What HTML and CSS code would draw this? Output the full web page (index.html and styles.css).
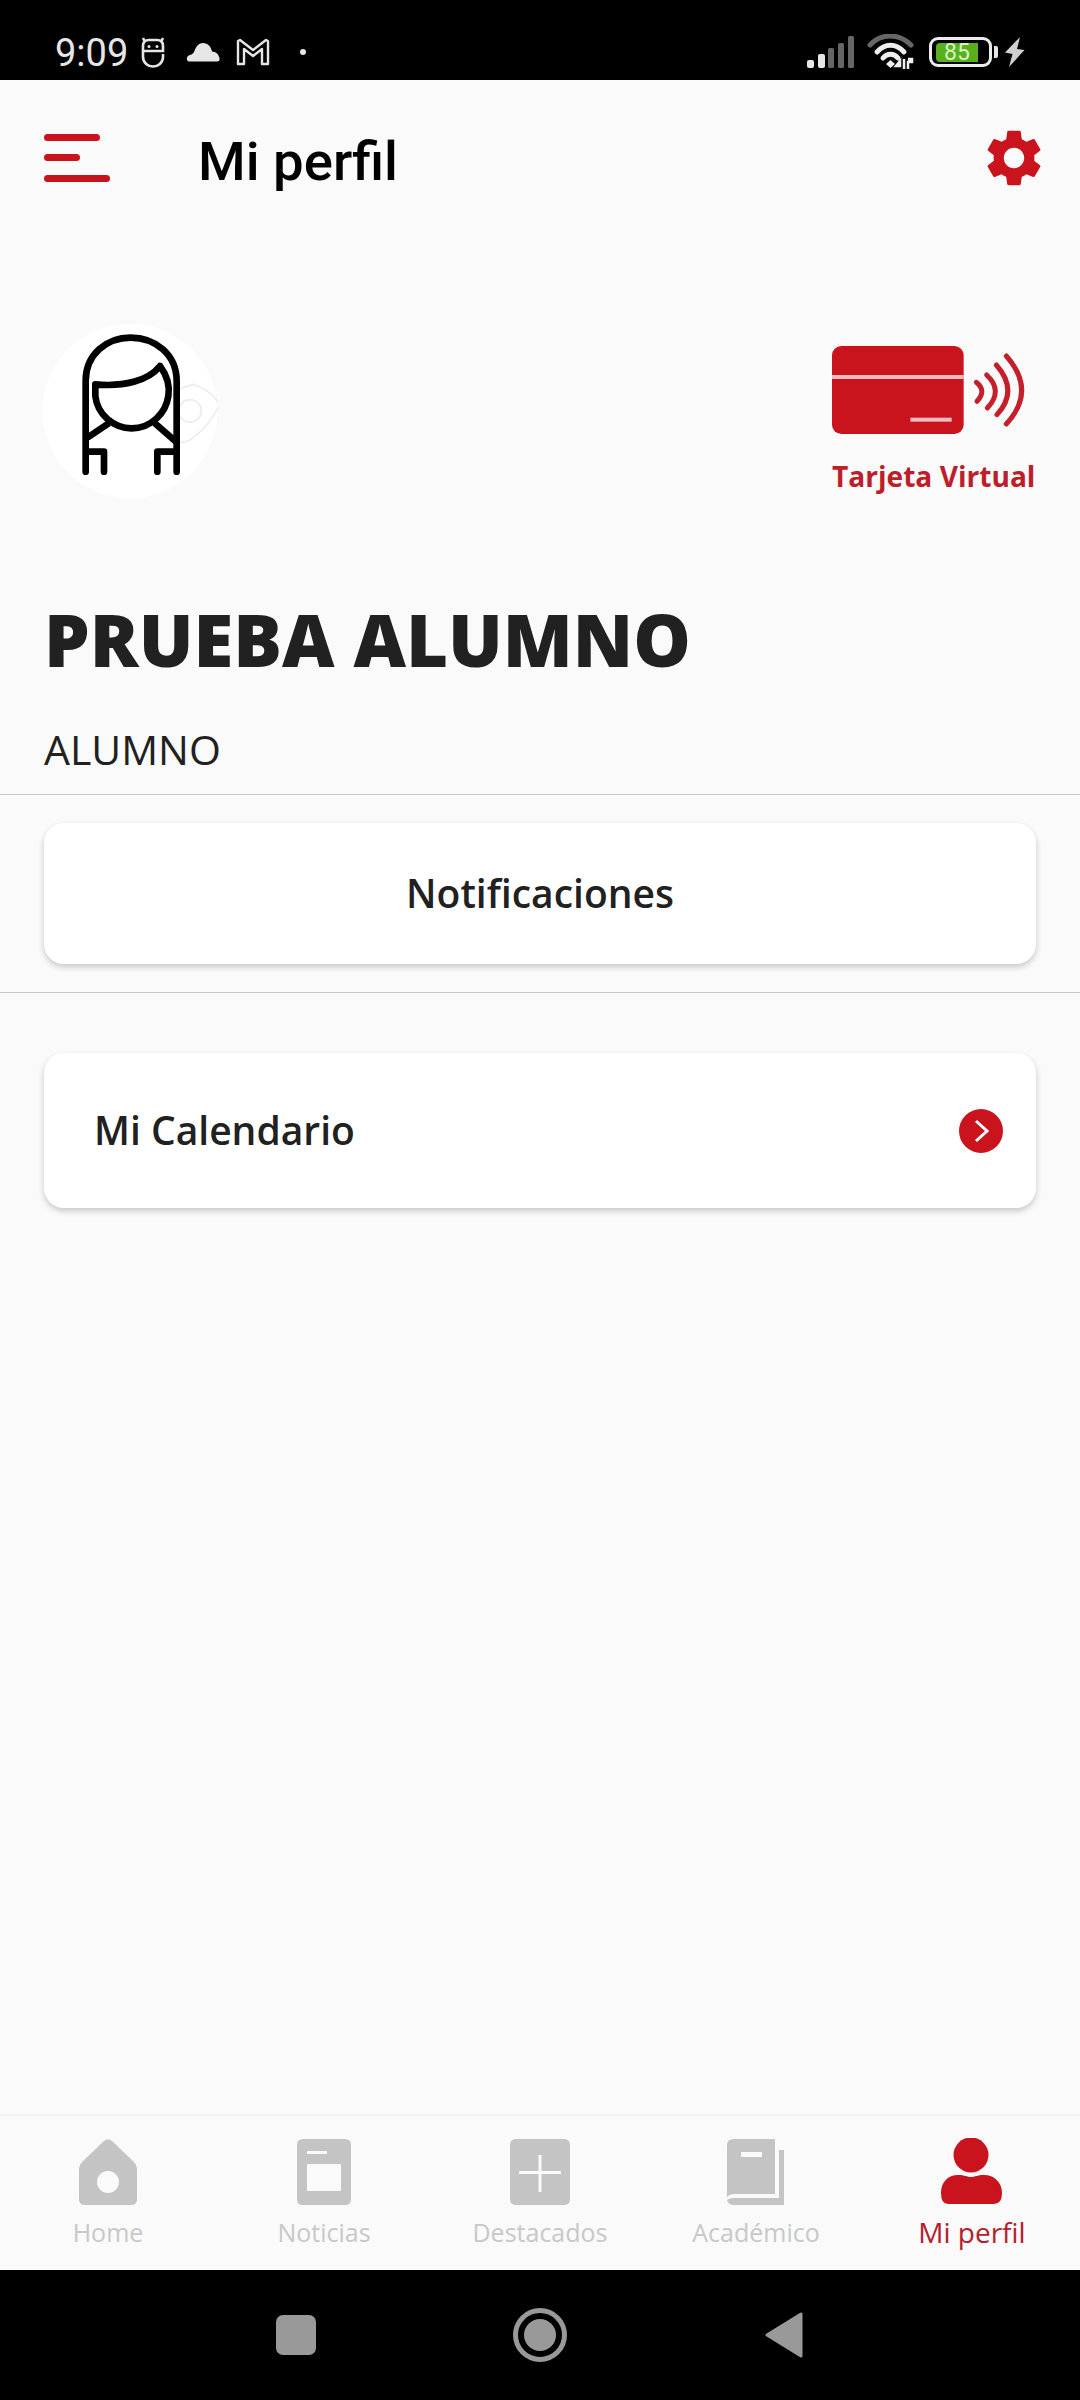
FILE: index.html
```html
<!DOCTYPE html>
<html lang="es">
<head>
    <meta charset="UTF-8">
    <meta name="viewport" content="width=device-width, initial-scale=1.0">
    <title>Mi perfil</title>
    <link rel="stylesheet" href="styles.css">
</head>
<body>
    <div class="status-bar">
        <div class="status-left">
            <span class="time">9:09</span>
            <svg class="st-android" width="24" height="32" viewBox="0 0 24 32" fill="none" stroke="#e6e6e6" stroke-width="2.6">
                <path d="M4 6 L2 2 M20 6 L22 2"/>
                <path d="M2 15 V10 Q2 4 8 4 H16 Q22 4 22 10 V15 H2 M2 15 V21 C2 27 7 30.500 12 30.500 C17 30.500 22 27 22 21 V18"/>
                <circle cx="8" cy="10.500" r="1.500" fill="#e6e6e6" stroke="none"/>
                <circle cx="16" cy="10.500" r="1.500" fill="#e6e6e6" stroke="none"/>
            </svg>
            <svg class="st-cloud" width="34" height="20" viewBox="0 0 34 20">
                <path fill="#e6e6e6" d="M3 19.500 C0 19.500 0 13.500 4 13 C6 12.500 7 11.500 8 10 C10 4 13 1 17 1 C22 1 25 5 26 9.500 C30 9.500 33 12.500 33.500 16.500 C34 18.500 33 19.500 31 19.500 Z"/>
            </svg>
            <svg class="st-mail" width="34" height="28" viewBox="0 0 34 28" fill="none" stroke="#e6e6e6" stroke-width="2.400" stroke-linejoin="round">
                <path d="M2 3 L4 2 L17 12 L30 2 L32 3 V26 H26 V11 L17 18 L8 11 V26 H2 Z"/>
            </svg>
            <span class="st-dot"></span>
        </div>
        <div class="status-right">
            <svg width="48" height="32" viewBox="0 0 48 32">
                <rect x="0" y="24" width="7" height="8" rx="2" fill="#e6e6e6"/>
                <rect x="11" y="18" width="7" height="14" rx="2" fill="#e6e6e6"/>
                <rect x="21" y="12" width="6" height="20" rx="1.500" fill="#666"/>
                <rect x="31" y="7" width="6" height="25" rx="1.500" fill="#666"/>
                <rect x="41" y="0" width="6" height="32" rx="1.500" fill="#666"/>
            </svg>
            <svg class="st-wifi" width="48" height="36" viewBox="0 0 48 36" fill="none" stroke-linecap="round">
                <path d="M3 11 C14 -1 32 -1 44 11" stroke="#666" stroke-width="5"/>
                <path d="M10 18 C18 9 29 9 37 18" stroke="#eee" stroke-width="5"/>
                <path d="M16 24 C20 19 27 19 31 24" stroke="#eee" stroke-width="5"/>
                <path d="M19 30 L23.500 26 L28 30 L23.500 34 Z" fill="#eee" stroke="none"/>
                <path d="M33 27 L29 32 H33 Z M37 25 V35 M41 25 H45 V28 H41 V35" stroke="#eee" stroke-width="2.500" fill="#eee" stroke-linecap="butt"/>
            </svg>
            <div class="battery">
                <div class="battery-body"><span class="battery-fill">85</span></div>
                <span class="battery-nub"></span>
            </div>
            <svg class="st-bolt" width="20" height="30" viewBox="0 0 20 30">
                <path fill="#d0d0d0" d="M15 0 L12 12 L19.500 13 L4 30 L7.500 17 L0 15.500 Z"/>
            </svg>
        </div>
    </div>

    <header class="top-bar">
        <svg class="menu-icon" width="66" height="48" viewBox="0 0 66 48">
            <rect x="0" y="0" width="56" height="7" rx="3.500"/>
            <rect x="0" y="20" width="36" height="7" rx="3.500"/>
            <rect x="0" y="41" width="66" height="7" rx="3.500"/>
        </svg>
        <h1 class="page-title">Mi perfil</h1>
        <svg class="gear" width="68" height="68" viewBox="0 0 24 24">
            <path fill-rule="evenodd" d="M19.140 12.940c.04-.3.06-.61.06-.94 0-.32-.02-.64-.07-.94l2.030-1.580a.49.49 0 0 0 .12-.61l-1.920-3.320a.488.488 0 0 0-.59-.22l-2.390.96c-.5-.38-1.030-.7-1.620-.94l-.36-2.540a.484.484 0 0 0-.48-.41h-3.840c-.24 0-.43.17-.47.41l-.36 2.540c-.59.24-1.130.57-1.620.94l-2.390-.96c-.22-.08-.47 0-.59.22L2.740 8.870c-.12.21-.08.47.12.61l2.030 1.580c-.05.3-.09.63-.09.94s.02.64.07.94l-2.030 1.580a.49.49 0 0 0-.12.61l1.920 3.320c.12.22.37.29.59.22l2.390-.96c.5.38 1.030.7 1.620.94l.36 2.540c.05.24.24.41.48.41h3.840c.24 0 .44-.17.47-.41l.36-2.540c.59-.24 1.130-.56 1.620-.94l2.390.96c.22.08.47 0 .59-.22l1.920-3.320c.12-.22.07-.47-.12-.61l-2.010-1.580zM12 15.600c-1.980 0-3.600-1.620-3.600-3.600s1.620-3.600 3.600-3.600 3.600 1.620 3.600 3.600-1.620 3.600-3.600 3.600z"/>
        </svg>
    </header>

    <main class="content">
        <div class="profile-row">
            <svg class="avatar" width="176" height="176" viewBox="66 66 528 528">
                <circle cx="330" cy="330" r="262" fill="#fff"/>
                <g fill="none" stroke="#ececec" stroke-width="5">
                    <path d="M425 330 C440 290 470 260 520 250 C550 260 580 280 600 310 C580 345 560 380 520 410 C495 430 470 430 455 400"/>
                    <circle cx="510" cy="330" r="34"/>
                </g>
                <g fill="none" stroke="#000" stroke-width="20" stroke-linecap="round" stroke-linejoin="round">
                    <path d="M197 512 V240 C197 160 260 110 332 110 C405 110 470 160 470 240 V512"/>
                    <path d="M226 250 C310 258 385 240 420 195 C442 225 450 255 445 285 C438 335 395 382 335 382 C280 382 232 340 226 285 Z"/>
                    <path d="M205 408 L262 370 M408 370 L468 422"/>
                    <path d="M205 452 H252 V512 M468 452 H412 V512"/>
                </g>
            </svg>
            <div class="virtual-card">
                <svg width="200" height="88" viewBox="97 78 600 264">
                    <rect x="97" y="78" width="395" height="264" rx="28" fill="#c9141e"/>
                    <rect x="97" y="165" width="395" height="12" fill="#f0bcc0"/>
                    <rect x="332" y="293" width="124" height="12" fill="#f0bcc0"/>
                    <g fill="none" stroke="#c3202b" stroke-width="15" stroke-linecap="round">
                        <path d="M530 187 Q562 212 532 244"/>
                        <path d="M561 165 Q612 212 563 264"/>
                        <path d="M590 135 Q658 212 592 284"/>
                        <path d="M620 108 Q712 212 620 312"/>
                    </g>
                </svg>
                <span class="virtual-card-label">Tarjeta Virtual</span>
            </div>
        </div>

        <h2 class="user-name">PRUEBA ALUMNO</h2>
        <p class="user-role">ALUMNO</p>
        <div class="divider"></div>
        <div class="card card-center">Notificaciones</div>
        <div class="divider"></div>
        <div class="card card-link">
            <span>Mi Calendario</span>
            <svg width="44" height="44" viewBox="0 0 44 44">
                <circle cx="22" cy="22" r="22" fill="#c9141e"/>
                <path d="M17 12 L28 22 L17 32" fill="none" stroke="#fff" stroke-width="3"/>
            </svg>
        </div>
    </main>

    <nav class="tab-bar">
        <div class="tab">
            <svg width="70" height="68" viewBox="0 0 70 68">
                <path fill-rule="evenodd" fill="#c4c4c4" d="M31 3 Q35 -0.500 39 3 L61 24 Q64 27 64 31 V61 Q64 67 58 67 H12 Q6 67 6 61 V31 Q6 27 9 24 Z M35 33 A11 11 0 1 0 35 55 A11 11 0 1 0 35 33 Z"/>
            </svg>
            <span>Home</span>
        </div>
        <div class="tab">
            <svg width="70" height="68" viewBox="0 0 70 68">
                <path fill-rule="evenodd" fill="#c4c4c4" d="M14 1 H56 Q62 1 62 7 V61 Q62 67 56 67 H14 Q8 67 8 61 V7 Q8 1 14 1 Z M18 13 V16 H38 V13 Z M19 26 Q18 26 18 27 V52 Q18 53 19 53 H51 Q52 53 52 52 V27 Q52 26 51 26 Z"/>
            </svg>
            <span>Noticias</span>
        </div>
        <div class="tab">
            <svg width="70" height="68" viewBox="0 0 70 68">
                <path fill-rule="evenodd" fill="#c4c4c4" d="M11 1 H59 Q65 1 65 7 V61 Q65 67 59 67 H11 Q5 67 5 61 V7 Q5 1 11 1 Z M33.500 17 V33 H14 V36 H33.500 V54 H36.500 V36 H56 V33 H36.500 V17 Z"/>
            </svg>
            <span>Destacados</span>
        </div>
        <div class="tab">
            <svg width="70" height="68" viewBox="0 0 70 68">
                <path fill-rule="evenodd" fill="#c4c4c4" d="M13 1 H54 V56 H14 Q7 56 6 60 V7 Q6 1 13 1 Z M20 14 V19 H41 V14 Z"/>
                <path fill="#c4c4c4" d="M58 12 H63 V67 H13 Q7 67 6 62 Q8 60 14 60 H58 Z"/>
            </svg>
            <span>Académico</span>
        </div>
        <div class="tab tab-active">
            <svg width="70" height="68" viewBox="0 0 70 68">
                <circle cx="34" cy="17" r="17.500" fill="#c9141e"/>
                <path fill="#c9141e" d="M4 55 C4 44 11 37 21 37 C28 37 30 39 34 39 C38 39 40 37 47 37 C57 37 65 44 65 55 Q65 66 57 66 H11 Q4 66 4 55 Z"/>
            </svg>
            <span>Mi perfil</span>
        </div>
    </nav>

    <div class="soft-keys">
        <span class="key-square"></span>
        <span class="key-home"><span></span></span>
        <svg width="38" height="46" viewBox="0 0 38 46">
            <path fill="#999" stroke="#999" stroke-width="3" stroke-linejoin="round" d="M36 2 V44 L2 23 Z"/>
        </svg>
    </div>
</body>
</html>
```

FILE: styles.css
```css
* { box-sizing: border-box; }

body {
    margin: 0;
    width: 1080px;
    height: 2400px;
    display: flex;
    flex-direction: column;
    background: #fafafa;
    font-family: "Open Sans", sans-serif;
    color: #212121;
    overflow: hidden;
}

/* status bar */
.status-bar {
    height: 80px;
    flex: none;
    background: #000;
    display: flex;
    justify-content: space-between;
    align-items: center;
    padding: 24px 55px 0 55px;
    color: #e6e6e6;
}
.status-left, .status-right { display: flex; align-items: center; }
.time { font-family: Roboto, sans-serif; font-size: 38px; line-height: 46px; width: 86px; padding-top: 2px; }
.st-android { margin-right: 21px; }
.st-cloud { margin-right: 16px; }
.st-dot {
    width: 6px;
    height: 6px;
    border-radius: 50%;
    background: #e6e6e6;
    margin-left: 30px;
}
.st-wifi { margin-left: 12px; margin-right: 14px; }
.battery { display: flex; align-items: center; }
.battery-body {
    width: 63px;
    height: 30px;
    border: 3px solid #ececec;
    border-radius: 9px;
    padding: 3px 11px 2px 4px;
    display: flex;
}
.battery-fill {
    flex: 1;
    background: #58b01c;
    border-radius: 4px 0 0 4px;
    color: #d5f5c0;
    font-family: Roboto, sans-serif;
    font-size: 23px;
    line-height: 20px;
    text-align: center;
}
.battery-nub {
    width: 4px;
    height: 12px;
    margin-left: 2px;
    background: #e6e6e6;
    border-radius: 0 2px 2px 0;
}
.st-bolt { margin-left: 7px; }

/* header */
.top-bar {
    height: 156px;
    flex: none;
    display: flex;
    align-items: center;
    padding: 0 32px 0 44px;
}
.menu-icon { fill: #c9141e; }
.page-title {
    margin: 0 0 0 88px;
    padding-top: 5px;
    flex: 1;
    font-family: Roboto, sans-serif;
    font-weight: 500;
    font-size: 54.5px;
    line-height: 64px;
    color: #000;
}
.gear { fill: #c9141e; }

/* profile */
.content { flex: 1; padding: 87px 0 0; }
.profile-row {
    display: flex;
    justify-content: space-between;
    padding: 0 44px;
}
.avatar { margin-left: -2px; }
.virtual-card {
    width: 204px;
    padding-top: 23px;
    display: flex;
    flex-direction: column;
}
.virtual-card-label {
    margin-top: 24px;
    font-size: 28.1px;
    font-weight: 700;
    line-height: 36px;
    color: #bd1e2a;
    white-space: nowrap;
}
.user-name {
    margin: 98px 44px 0;
    font-size: 72.4px;
    font-weight: 800;
    line-height: 84px;
}
.user-role {
    margin: 43px 44px 20px;
    font-size: 41px;
    line-height: 50px;
}
.divider { height: 1px; background: #c8c8c8; }
.card {
    margin: 28px 44px;
    background: #fff;
    border-radius: 20px;
    box-shadow: 0 3px 6px rgba(0, 0, 0, 0.2);
    font-size: 39px;
    font-weight: 600;
    display: flex;
    align-items: center;
}
.card span, .card-center { padding-bottom: 2px; }
.card-center { height: 141px; justify-content: center; }
.card-link {
    height: 155px;
    margin-top: 60px;
    justify-content: space-between;
    padding: 0 33px 0 50px;
}

/* bottom tabs */
.tab-bar {
    height: 156px;
    flex: none;
    display: grid;
    grid-template-columns: repeat(5, 1fr);
    border-top: 2px solid #f3f3f3;
    padding-top: 22px;
}
.tab {
    display: flex;
    flex-direction: column;
    align-items: center;
    gap: 9px;
    font-size: 25px;
    line-height: 34px;
    color: #c8c8c8;
}
.tab-active { color: #b5202d; font-size: 28px; }

/* android keys */
.soft-keys {
    height: 130px;
    flex: none;
    background: #000;
    display: flex;
    align-items: center;
    padding-left: 276px;
}
.key-square {
    width: 40px;
    height: 40px;
    border-radius: 7px;
    background: #999;
    margin-right: 197px;
}
.key-home {
    width: 54px;
    height: 54px;
    border: 5px solid #999;
    border-radius: 50%;
    padding: 6px;
    margin-right: 198px;
}
.key-home span {
    display: block;
    width: 32px;
    height: 32px;
    border-radius: 50%;
    background: #999;
}
```
